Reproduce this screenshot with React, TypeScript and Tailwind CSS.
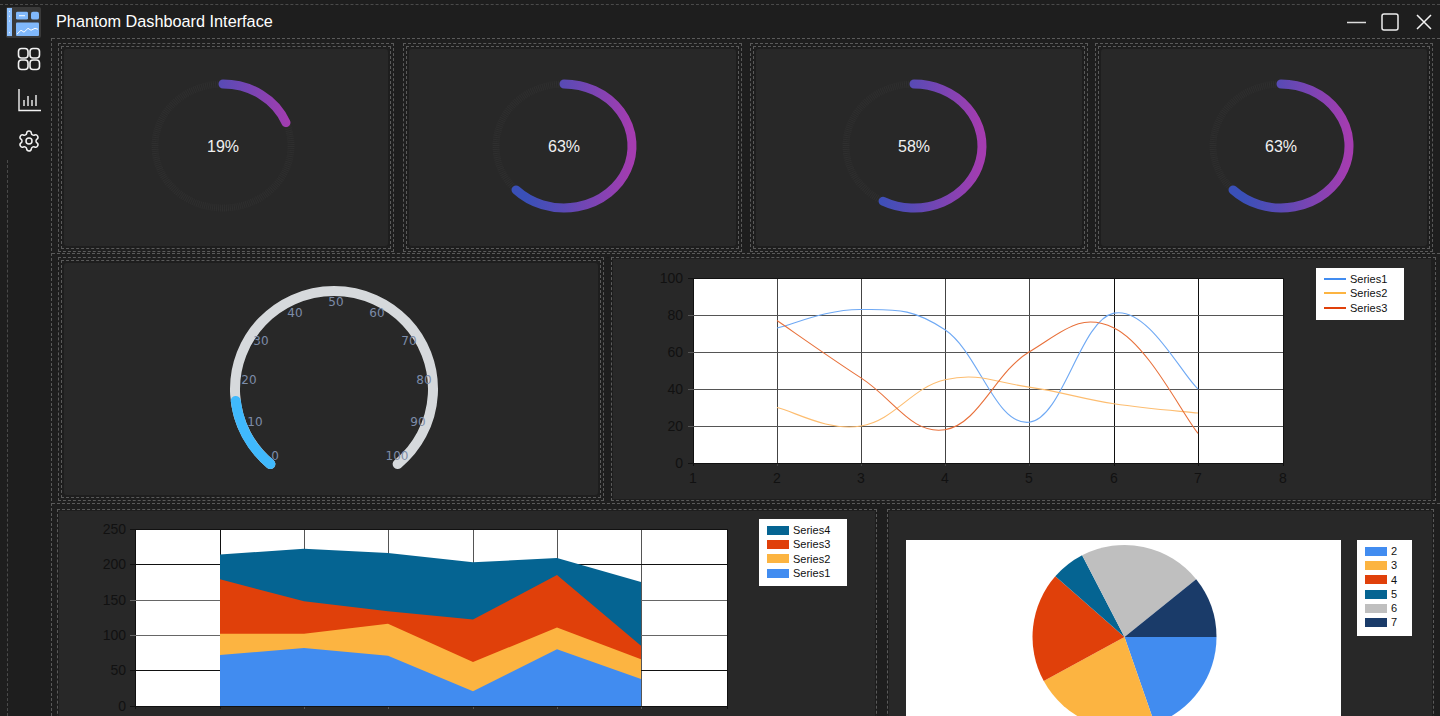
import React from "react";
import { Settings } from "lucide-react";

const FONT = "[font-family:'Liberation_Sans',Arial,sans-serif]";
const C = { blue: "#418cf0", orange: "#fcb441", red: "#e0400a", teal: "#056492", gray: "#bfbfbf", navy: "#1a3b69" };

function spline(pts: [number, number][], t = 0.2) {
  let d = `M${pts[0][0]} ${pts[0][1]}`;
  for (let i = 0; i < pts.length - 1; i++) {
    const p0 = pts[Math.max(i - 1, 0)], p1 = pts[i], p2 = pts[i + 1], p3 = pts[Math.min(i + 2, pts.length - 1)];
    d += ` C${p1[0] + (p2[0] - p0[0]) * t} ${p1[1] + (p2[1] - p0[1]) * t} ${p2[0] - (p3[0] - p1[0]) * t} ${p2[1] - (p3[1] - p1[1]) * t} ${p2[0]} ${p2[1]}`;
  }
  return d;
}

function arc(cx: number, cy: number, rx: number, ry: number, from: number, to: number) {
  const P = (a: number) => {
    const r = (a * Math.PI) / 180;
    return `${cx + rx * Math.sin(r)} ${cy - ry * Math.cos(r)}`;
  };
  return `M${P(from)} A${rx} ${ry} 0 ${to - from > 180 ? 1 : 0} 1 ${P(to)}`;
}

function Donut({ value, id }: { value: number; id: string }) {
  return (
    <svg width="150" height="140" viewBox="0 0 150 140" className="block">
      <defs>
        <linearGradient id={id} gradientUnits="userSpaceOnUse" x1="7" y1="0" x2="143" y2="0">
          <stop offset="0.22" stopColor="#3a50b8" />
          <stop offset="0.5" stopColor="#5b4ab5" />
          <stop offset="1" stopColor="#a53cb0" />
        </linearGradient>
      </defs>
      <ellipse cx="75" cy="70" rx="68" ry="62" fill="none" stroke="#2f2f2f" strokeWidth="7" strokeDasharray="1 1" />
      <path d={arc(75, 70, 68, 62, 0, value * 3.57)} fill="none" stroke={`url(#${id})`} strokeWidth="9" strokeLinecap="round" />
      <text x="75" y="76" textAnchor="middle" fontSize="16" fill="#f0f0f0" fontFamily="'Liberation Sans', Arial, sans-serif">
        {value}%
      </text>
    </svg>
  );
}

const gaugeLabels: [string, number, number][] = [
  ["0", 275, 456], ["10", 255, 422], ["20", 249, 380], ["30", 261, 341], ["40", 295, 313], ["50", 336, 302],
  ["60", 377, 313], ["70", 409, 341], ["80", 424, 380], ["90", 418, 422], ["100", 397, 456],
];

function Gauge() {
  const ox = 220, oy = 276, cx = 334 - ox, cy = 389 - oy;
  return (
    <svg width="230" height="210" className="block">
      <path d={arc(cx, cy, 99, 98, 220, 500)} fill="none" stroke="#d6d9dc" strokeWidth="10" strokeLinecap="round" />
      <path d={arc(cx, cy, 99, 98, 220, 263)} fill="none" stroke="#40b9fd" strokeWidth="10" strokeLinecap="round" />
      {gaugeLabels.map(([t, x, y]) => (
        <text key={t} x={x - ox} y={y - oy + 4} textAnchor="middle" fontSize="12" fill="#7d8ca8" fontFamily="'DejaVu Sans', sans-serif">
          {t}
        </text>
      ))}
    </svg>
  );
}

const AX = { fontSize: 14, fill: "#111", fontFamily: "'Liberation Sans', Arial, sans-serif" };

function LineChart() {
  const ox = 650, oy = 268;
  const xs = [693, 777, 861, 945, 1029, 1114, 1198, 1283].map((v) => v - ox);
  const ys = [463, 426, 389, 352, 315, 278].map((v) => v - oy);
  const X = (v: number) => xs[v - 1];
  const Y = (v: number) => 463 - oy - v * 1.85;
  const series: [string, number[]][] = [
    ["#6fa9f4", [73, 83, 72, 22, 81, 40]],
    ["#fdbd70", [30, 20, 45, 41, 32, 27]],
    ["#e8703a", [77, 46, 18, 60, 73, 16]],
  ];
  return (
    <svg width="650" height="222" className="block">
      <rect x={xs[0]} y={ys[5]} width={xs[7] - xs[0]} height={ys[0] - ys[5]} fill="#fff" />
      {xs.map((x, i) => (
        <g key={i}>
          <path d={`M${x + 0.5} ${ys[5]}V${ys[0] + 3}`} stroke={i === 0 || i === 7 || i > 4 ? "#111" : "#444"} />
          <text x={x} y={ys[0] + 20} textAnchor="middle" {...AX}>{i + 1}</text>
        </g>
      ))}
      {ys.map((y, i) => (
        <g key={i}>
          <path d={`M${xs[0] - 5} ${y + 0.5}H${xs[7]}`} stroke={i === 0 || i === 5 ? "#111" : "#555"} />
          <text x={xs[0] - 10} y={y + 5} textAnchor="end" {...AX}>{i * 20}</text>
        </g>
      ))}
      {series.map(([c, v]) => (
        <path key={c} d={spline(v.map((a, i) => [X(i + 2), Y(a)] as [number, number]))} fill="none" stroke={c} strokeWidth="1.1" />
      ))}
    </svg>
  );
}

function AreaChart() {
  const ox = 95, oy = 519;
  const xs = [135, 220, 304, 388, 473, 557, 641, 727].map((v) => v - ox);
  const ys = [706, 670, 635, 600, 564, 529].map((v) => v - oy);
  const Y = (v: number) => ys[0] - v * 0.708;
  const tops: [string, number[]][] = [
    [C.teal, [214, 222, 216, 203, 209, 175]],
    [C.red, [179, 148, 134, 122, 185, 85]],
    [C.orange, [102, 102, 116, 62, 111, 66]],
    [C.blue, [72, 82, 71, 21, 80, 38]],
  ];
  return (
    <svg width="640" height="197" className="block">
      <rect x={xs[0]} y={ys[5]} width={xs[7] - xs[0]} height={ys[0] - ys[5]} fill="#fff" />
      {xs.map((x, i) => (
        <path key={i} d={`M${x + 0.5} ${ys[5]}V${ys[0] + 3}`} stroke={i === 0 || i === 7 || i === 1 ? "#111" : "#555"} />
      ))}
      {ys.map((y, i) => (
        <g key={i}>
          <path d={`M${xs[0] - 5} ${y + 0.5}H${xs[7]}`} stroke={i === 2 || i === 3 ? "#666" : "#111"} />
          <text x={xs[0] - 9} y={y + 5} textAnchor="end" {...AX}>{i * 50}</text>
        </g>
      ))}
      {tops.map(([c, v]) => (
        <path key={c} fill={c} d={`M${xs[1]} ${ys[0]} ${v.map((a, i) => `L${xs[i + 1]} ${Y(a)}`).join(" ")} L${xs[6]} ${ys[0]} Z`} />
      ))}
      <path d={`M${xs[0]} ${ys[0] + 0.5}H${xs[7]}`} stroke="#111" />
    </svg>
  );
}

function PieChart() {
  const cx = 1124.5 - 906, cy = 637 - 540, r = 92;
  const data: [string, number][] = [[C.blue, 73], [C.orange, 83], [C.red, 72], [C.teal, 22], [C.gray, 81], [C.navy, 40]];
  const sum = data.reduce((a, b) => a + b[1], 0);
  let a = 0;
  return (
    <svg width="435" height="176" className="block bg-white">
      {data.map(([c, v]) => {
        const s = a, e = a + (v / sum) * Math.PI * 2;
        a = e;
        return (
          <path key={c} fill={c} d={`M${cx} ${cy} L${cx + r * Math.cos(s)} ${cy + r * Math.sin(s)} A${r} ${r} 0 ${e - s > Math.PI ? 1 : 0} 1 ${cx + r * Math.cos(e)} ${cy + r * Math.sin(e)} Z`} />
        );
      })}
    </svg>
  );
}

function Legend({ items, line, className }: { items: [string, string][]; line?: boolean; className: string }) {
  return (
    <div className={`flex flex-none flex-col bg-white pl-2 pt-[4px] text-[11px] leading-[14.3px] text-[#111] ${className}`}>
      {items.map(([c, t]) => (
        <div key={t} className="flex items-center gap-1">
          {line ? (
            <span className="h-[2px] w-[22px]" style={{ background: c }} />
          ) : (
            <span className="h-[9px] w-[22px]" style={{ background: c }} />
          )}
          <span>{t}</span>
        </div>
      ))}
    </div>
  );
}

const dash = "border border-dashed border-[#5a5a5a]";

function Cell({ className, children, inner }: { className: string; children: React.ReactNode; inner: string }) {
  return (
    <div className={`flex-none p-[2px] ${dash} ${className}`}>
      <div className={`h-full p-[2px] ${dash}`}>
        <div className={`h-full overflow-hidden rounded-[3px] bg-[#282828] ${inner}`}>{children}</div>
      </div>
    </div>
  );
}

function Single({ className, children, inner }: { className: string; children: React.ReactNode; inner: string }) {
  return (
    <div className={`flex-none p-[1px] ${dash} ${className}`}>
      <div className={`h-full overflow-hidden bg-[#282828] ${inner}`}>{children}</div>
    </div>
  );
}

export default function App() {
  return (
    <div className={`flex h-[716px] w-[1440px] flex-col overflow-hidden bg-[#1e1e1e] ${FONT}`}>
      {/* title bar */}
      <div className="h-[38px] flex-none pt-[4px]">
        <div className="flex h-[34px] items-center border-t border-dashed border-[#4a4a4a] pl-[6px]">
          <svg width="35" height="31" viewBox="0 0 35 32" preserveAspectRatio="none" className="mt-[1px] flex-none">
            <rect x="0" y="0" width="35" height="32" rx="2" fill="#3a3a3a" />
            <rect x="1" y="1" width="5" height="29" fill="#8cc0ff" />
            <path d="M3.5 4v1M3.5 9v1M3.5 14v1M3.5 26v1" stroke="#fff" strokeWidth="1" />
            <rect x="10" y="5" width="12" height="8" rx="1.5" fill="#80b8fb" />
            <path d="M13 9h6" stroke="#fff" />
            <rect x="25" y="5" width="8" height="8" rx="2" fill="#80b8fb" />
            <rect x="10" y="16" width="23" height="14" rx="1" fill="#80b8fb" />
            <path d="M11 28l4-4 3 2 4-4 3 2 4-2 3 1" fill="none" stroke="#fff" strokeWidth="1" />
          </svg>
          <span className="ml-[15px] whitespace-nowrap text-[16.25px] leading-none text-white">Phantom Dashboard Interface</span>
          <div className="ml-auto flex items-center pr-[8px]">
            <svg width="19" height="18" className="flex-none"><path d="M0 9.5h19" stroke="#ddd" strokeWidth="1.5" /></svg>
            <svg width="18" height="18" className="ml-[15px] flex-none"><rect x="1" y="1" width="16" height="16" rx="2" fill="none" stroke="#eee" strokeWidth="1.5" /></svg>
            <svg width="16" height="16" className="ml-[17px] flex-none"><path d="M1 1l14 14M15 1L1 15" stroke="#f4f4f4" strokeWidth="1.5" /></svg>
          </div>
        </div>
      </div>

      <div className="flex min-h-0 flex-1">
        {/* sidebar */}
        <div className="flex w-[52px] flex-none flex-col border-r border-dashed border-[#5a5a5a]">
          <div className="flex flex-col gap-[17px] pl-[17px] pt-[9px] text-white">
            <svg width="24" height="24" viewBox="0 0 24 24" fill="none" stroke="#f2f2f2" strokeWidth="1.6">
              <rect x="1.5" y="1.5" width="9.5" height="9.5" rx="3" />
              <rect x="13" y="1.5" width="9.5" height="9.5" rx="3" />
              <rect x="1.5" y="13" width="9.5" height="9.5" rx="3" />
              <rect x="13" y="13" width="9.5" height="9.5" rx="3" />
            </svg>
            <svg width="24" height="24" viewBox="0 0 24 24" fill="none" strokeWidth="1.4">
              <path d="M2 1v21.5H24" stroke="#f2f2f2" />
              <path d="M7 18v-6M11 18V8M15 18v-6M19 18V7" stroke="#d8d8d8" strokeWidth="1.6" />
            </svg>
            <Settings size={24} strokeWidth={1.5} color="#f2f2f2" />
          </div>
          <div className="ml-[7px] mt-[7px] flex-1 border-l border-dashed border-[#4a4a4a]" />
        </div>

        {/* content */}
        <div className="min-w-0 flex-1">
          {/* row 1 */}
          <div className="flex h-[215px] items-start border-t border-dashed border-[#5a5a5a] pl-[6px] pt-[4px]">
            <Cell className="h-[209px] w-[336px]" inner="pl-[84px] pt-[27px]"><Donut value={19} id="g1" /></Cell>
            <Cell className="ml-[9px] h-[209px] w-[339px]" inner="pl-[80px] pt-[27px]"><Donut value={63} id="g2" /></Cell>
            <Cell className="ml-[8px] h-[209px] w-[338px]" inner="pl-[83px] pt-[27px]"><Donut value={58} id="g3" /></Cell>
            <Cell className="ml-[7px] h-[209px] w-[338px]" inner="pl-[105px] pt-[27px]"><Donut value={63} id="g4" /></Cell>
          </div>
          {/* row 2 */}
          <div className="flex h-[250px] items-start border-t border-dashed border-[#5a5a5a] pl-[6px] pt-[3px]">
            <Cell className="h-[244px] w-[546px]" inner="pl-[156px] pt-[13px]"><Gauge /></Cell>
            <Single className="ml-[7px] h-[244px] w-[825px] pr-[4px]" inner="flex items-start pl-[37px] pt-[9px]">
              <LineChart />
              <Legend className="ml-[16px] h-[52px] w-[88px]" line items={[["#418cf0", "Series1"], ["#fcb441", "Series2"], ["#e0400a", "Series3"]]} />
            </Single>
          </div>
          {/* row 3 */}
          <div className="flex h-[220px] items-start border-t border-dashed border-[#5a5a5a] pl-[5px] pt-[5px]">
            <Single className="h-[230px] w-[820px]" inner="flex items-start pl-[36px] pt-[8px]">
              <AreaChart />
              <Legend className="ml-[24px] h-[67px] w-[88px]" items={[[C.teal, "Series4"], [C.red, "Series3"], [C.orange, "Series2"], [C.blue, "Series1"]]} />
            </Single>
            <Single className="ml-[10px] h-[230px] w-[547px]" inner="flex items-start pl-[17px] pt-[29px]">
              <PieChart />
              <Legend className="ml-[16px] h-[96px] w-[55px]" items={[[C.blue, "2"], [C.orange, "3"], [C.red, "4"], [C.teal, "5"], [C.gray, "6"], [C.navy, "7"]]} />
            </Single>
          </div>
        </div>
      </div>
    </div>
  );
}
